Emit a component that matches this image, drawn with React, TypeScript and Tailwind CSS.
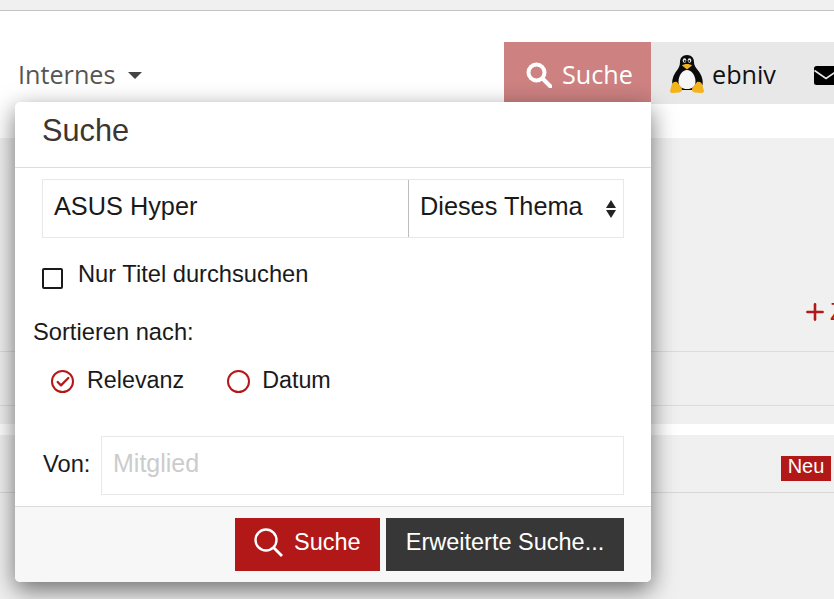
import { Check, Plus } from "lucide-react";

const sans = "font-['Liberation_Sans',Arial,sans-serif]";
const open = "font-['Open_Sans',sans-serif]";

function Tux() {
  return (
    <svg viewBox="0 0 35 38" className="-mt-[2px] h-[38px] w-[35px] shrink-0" aria-hidden="true">
      <path d="M17 0c-4.500 0-7 3-7 7 0 4-1.500 6-3.500 9-3 4-5 9-4 14l5 5h20l5-5c1-5-1-10-4-14-2-3-4.500-5-4.500-9 0-4-2.500-7-7-7z" fill="#0b0b0b" />
      <path d="M17 15c-4.500 0-8.500 5.500-8.500 11.500 0 5.500 3.500 7.500 8.500 7.500s8.500-2 8.500-7.500c0-6-4-11.500-8.500-11.500z" fill="#f6f6f6" />
      <ellipse cx="14.500" cy="5.500" rx="1.800" ry="2.300" fill="#e4e4e4" />
      <ellipse cx="19.500" cy="5.500" rx="1.800" ry="2.300" fill="#e4e4e4" />
      <circle cx="14.800" cy="6" r="0.900" fill="#111" />
      <circle cx="19.200" cy="6" r="0.900" fill="#111" />
      <path d="M12 10.500c2-2 8-2 10 0l-5 4z" fill="#f2b31c" />
      <path d="M7 27l4 5c2 3 1 5-2 5.500l-6 0.500c-1.500 0-3-0.500-3-2l1.500-5.500c0.500-3 3-4.500 5.500-3.500z" fill="#f2b31c" />
      <path d="M27 27l-4 5c-2 3-1 5 2 5.500l6 0.500c1.500 0 3-0.500 3-2l-1.500-5.500c-0.500-3-3-4.500-5.500-3.500z" fill="#f2b31c" />
    </svg>
  );
}

function Magnifier({ bold }: { bold?: boolean }) {
  if (bold) {
    return (
      <svg viewBox="0 0 26 26" className="h-[26px] w-[26px] shrink-0" fill="none" stroke="currentColor" strokeWidth="4" aria-hidden="true">
        <circle cx="10.5" cy="10.5" r="8" />
        <path d="M16.500 16.500l8 8" strokeLinecap="round" />
      </svg>
    );
  }
  return (
    <svg viewBox="0 0 29 29" className="mb-[4px] h-[29px] w-[29px] shrink-0" fill="none" stroke="currentColor" strokeWidth="2.4" aria-hidden="true">
      <circle cx="12" cy="12" r="10.500" />
      <path d="M19.500 19.500l8.500 8.500" strokeWidth="2.800" />
    </svg>
  );
}

function Header() {
  return (
    <header className={`flex h-[127px] items-start bg-white pt-[31px] ${open}`}>
      <div className="flex h-[62px] w-[504px] shrink-0 items-center gap-[12px] pl-[18px] pt-[4px] text-[25.2px] text-[#555555]">
        <span>Internes</span>
        <span className="mt-[1px] h-0 w-0 border-x-[7px] border-t-[7px] border-x-transparent border-t-[#444444]" />
      </div>
      <div className="flex h-[60px] w-[147px] shrink-0 items-center gap-[10px] bg-[#cd8181] pl-[22px] pt-[6px] text-[25.2px] text-white">
        <Magnifier bold />
        <span>Suche</span>
      </div>
      <div className="flex h-[62px] min-w-0 flex-1 items-center overflow-hidden bg-[#e8e8e8] pl-[19px] pt-[4px] text-[25.2px] text-[#111111]">
        <Tux />
        <span className="ml-[7px]">ebniv</span>
        <svg viewBox="0 0 24 19" className="ml-[38px] h-[19px] w-[24px] shrink-0" aria-hidden="true">
          <rect width="24" height="19" rx="2.500" fill="#000" />
          <path d="M0.500 4.500l11.500 8 11.500-8" fill="none" stroke="#e8e8e8" strokeWidth="1.600" />
        </svg>
      </div>
    </header>
  );
}

function Background() {
  return (
    <main className={`${sans} text-[#222222]`}>
      <section className="bg-[#f0f0f0]">
        <div className="flex h-[214px] items-end overflow-hidden border-b border-[#dcdcdc] pb-[24px] pl-[802px]">
          <span className="flex shrink-0 items-center whitespace-nowrap text-[24px] leading-[30px] text-[#b31818]">
            <Plus size={26} strokeWidth={2.4} />
            <span className="ml-[2px]">Zu</span>
          </span>
        </div>
        <div className="h-[54px] border-b border-[#dcdcdc]" />
        <div className="h-[18px]" />
      </section>
      <div className="h-[11px] bg-white" />
      <section className="bg-[#f0f0f0]">
        <div className="flex h-[58px] items-center justify-end border-b border-[#d8d8d8] pr-[3px]">
          <span className="mt-[10px] flex h-[25px] w-[50px] items-center justify-center bg-[#b21818] pb-[5px] text-[20px] text-white">Neu</span>
        </div>
        <div className="h-[106px]" />
      </section>
    </main>
  );
}

function SearchMenu() {
  return (
    <div className={`absolute left-[15px] top-[102px] flex h-[480px] w-[636px] flex-col rounded-b-[5px] rounded-tl-[5px] bg-white text-[23.7px] text-[#1a1a1a] shadow-[0_8px_24px_rgba(0,0,0,0.55)] ${sans}`}>
      <h3 className="h-[66px] border-b border-[#dddddd] pl-[27px] pt-[10px] text-[30.7px] font-normal leading-[38px] text-[#3d3531]">Suche</h3>
      <div className="flex flex-1 flex-col pl-[27px] pr-[27px] pt-[11px]">
        <div className="flex h-[59px] border border-[#e8e8e8]">
          <div className="flex flex-1 items-center pl-[11px] pb-[4px] text-[25.3px]">ASUS Hyper</div>
          <div className="flex w-[215px] items-center justify-between border-l border-[#bdbdbd] pl-[11px] pr-[7px] text-[25.3px]">
            <span className="pb-[4px]">Dieses Thema</span>
            <span className="flex flex-col gap-[2px]">
              <span className="h-0 w-0 border-x-[5.5px] border-b-[8px] border-x-transparent border-b-[#222222]" />
              <span className="h-0 w-0 border-x-[5.5px] border-t-[8px] border-x-transparent border-t-[#222222]" />
            </span>
          </div>
        </div>
        <label className="mt-[21px] flex h-[32px] items-center">
          <span className="mt-[6px] h-[21px] w-[21px] rounded-[2px] border-2 border-[#1a1a1a]" />
          <span className="mb-[1px] ml-[15px]">Nur Titel durchsuchen</span>
        </label>
        <div className="-ml-[9px] mt-[25px] leading-[32px]">Sortieren nach:</div>
        <div className="mt-[16px] flex h-[32px] items-center pl-[9px] text-[23.3px]">
          <span className="mt-[3px] flex h-[23px] w-[23px] items-center justify-center rounded-full border-[2.500px] border-[#b21818]">
            <Check size={16} strokeWidth={3.4} className="text-[#b21818]" />
          </span>
          <span className="ml-[13px]">Relevanz</span>
          <span className="ml-[43px] mt-[3px] h-[23px] w-[23px] rounded-full border-[2.500px] border-[#b21818]" />
          <span className="ml-[12px]">Datum</span>
        </div>
        <div className="mt-[40px] flex h-[59px] items-center">
          <span className="mb-[2px] w-[59px] pl-[1px]">Von:</span>
          <div className="flex h-full flex-1 items-center border border-[#e8e8e8] pb-[4px] pl-[11px] text-[25px] text-[#cccccc]">Mitglied</div>
        </div>
      </div>
      <div className="flex h-[76px] justify-end gap-[6px] rounded-b-[5px] border-t border-[#dddddd] bg-[#f7f7f7] pr-[27px] pt-[11px]">
        <button className="flex h-[53px] w-[145px] items-center gap-[11px] bg-[#b21818] pl-[19px] text-[23.5px] text-white">
          <Magnifier />
          <span className="pb-[4px]">Suche</span>
        </button>
        <button className="h-[53px] w-[238px] bg-[#373737] pb-[4px] text-[23.5px] text-white">Erweiterte Suche...</button>
      </div>
    </div>
  );
}

export default function App() {
  return (
    <div className="relative h-[599px] w-[834px] overflow-hidden bg-[#f0f0f0]">
      <div className="h-[10px] bg-[#f0f0f0]" />
      <div className="h-px bg-[#c4c4c4]" />
      <Header />
      <Background />
      <SearchMenu />
    </div>
  );
}
